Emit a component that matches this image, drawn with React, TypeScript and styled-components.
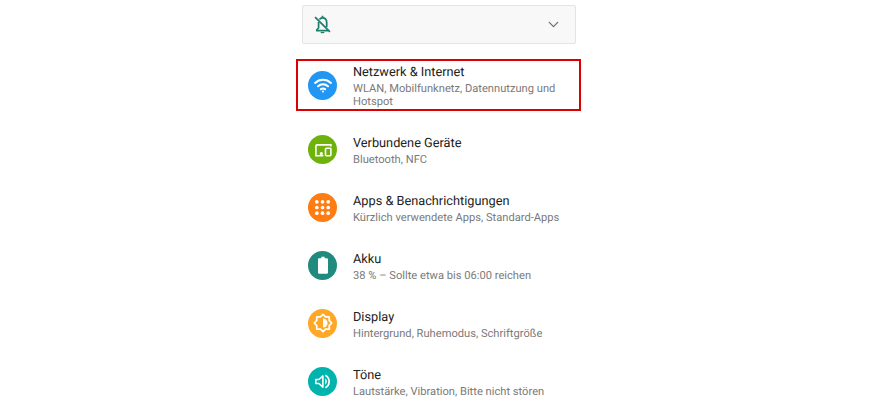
import React from "react";
import styled, { createGlobalStyle } from "styled-components";
import { ChevronDown } from "lucide-react";

const GlobalStyle = createGlobalStyle`
  html, body {
    margin: 0;
    padding: 0;
    background: #fff;
    font-family: Roboto, "Liberation Sans", sans-serif;
    text-rendering: geometricPrecision;
  }
  body {
    height: 400px;
    overflow: hidden;
  }
`;

const Page = styled.div`
  width: 285px;
  height: 400px;
  overflow: hidden;
  padding: 5px 0 0 296px;
`;

const Banner = styled.div`
  box-sizing: border-box;
  width: 274px;
  height: 39px;
  margin: 0 0 15px 6px;
  padding: 0 13px 0 9px;
  display: flex;
  align-items: center;
  justify-content: space-between;
  background: #f8f8f8;
  border: 1px solid #e4e4e4;
  border-radius: 2px;
  color: #6d6d6d;
`;

const Row = styled.div<{ $selected?: boolean }>`
  box-sizing: border-box;
  display: flex;
  align-items: center;
  gap: 16px;
  padding-left: ${(p) => (p.$selected ? "10px" : "12px")};
  height: ${(p) => (p.$selected ? "52px" : "58px")};
  margin-bottom: ${(p) => (p.$selected ? "9px" : "0")};
  border: ${(p) => (p.$selected ? "2px solid #dd0000" : "none")};
`;

const IconCircle = styled.div<{ $color: string }>`
  flex: none;
  width: 29px;
  height: 29px;
  border-radius: 50%;
  background: ${(p) => p.$color};
  display: flex;
  align-items: center;
  justify-content: center;
  color: #fff;
`;

const TextBlock = styled.div<{ $selected?: boolean }>`
  display: flex;
  flex-direction: column;
  gap: 1px;
  min-width: 0;
  padding-top: ${(p) => (p.$selected ? "1px" : "2px")};
`;

const Title = styled.div`
  font-size: 12.75px;
  line-height: 17px;
  color: #212121;
`;

const Summary = styled.div`
  font-size: 11.15px;
  line-height: 13px;
  color: #7a7a7a;
  width: 212px;
`;

const BellOff = () => (
  <svg width="21" height="21" viewBox="0 0 24 24" fill="none" stroke="#1c7f6c" strokeWidth="2">
    <path d="M9.500 20.500c.4 1 1.300 1.500 2.500 1.500s2.100-.5 2.500-1.500" fill="#1c7f6c" stroke="none" />
    <path d="M7.500 9v7l-2 2v1h13M8.500 6.200C9.300 5 10.500 4.500 12 4.500c3 0 4.800 2.300 4.800 5.500v5" strokeLinejoin="round" />
    <path d="M12 2v2.500" />
    <path d="M3.500 3.500l17 17" />
  </svg>
);

const WifiIcon = () => (
  <svg width="20" height="20" viewBox="0 0 24 24" fill="none" stroke="#fff" strokeWidth="2.500" strokeLinecap="round">
    <path d="M2.500 9.500c5.500-5 13.500-5 19 0" />
    <path d="M6 13.500c3.500-3 8.500-3 12 0" />
    <path d="M9.500 17c1.500-1 3.500-1 5 0" />
    <circle cx="12" cy="19.800" r="1.300" fill="#fff" stroke="none" />
  </svg>
);

const DevicesIcon = () => (
  <svg width="20" height="20" viewBox="0 0 24 24" fill="none" stroke="#fff" strokeWidth="1.900">
    <path d="M12.500 20H3.500V8.500A1.500 1.500 0 0 1 5 7h16.500v2" />
    <rect x="15" y="11" width="6.500" height="9" rx="1" />
    <circle cx="10" cy="17.500" r="1.900" fill="#fff" stroke="none" />
  </svg>
);

const AppsIcon = () => (
  <svg width="17" height="17" viewBox="0 0 24 24" fill="#fff">
    {[4, 12, 20].flatMap((y) =>
      [4, 12, 20].map((x) => <circle key={`${x}-${y}`} cx={x} cy={y} r="2.600" />)
    )}
  </svg>
);

const BatteryIcon = () => (
  <svg width="20" height="20" viewBox="0 0 24 24" fill="#fff">
    <path d="M10 2h4v2h2.500c.8 0 1.500.7 1.500 1.500V21c0 .8-.7 1.500-1.500 1.500h-9C6.700 22.500 6 21.800 6 21V5.500C6 4.700 6.700 4 7.500 4H10z" />
  </svg>
);

const BrightnessIcon = () => (
  <svg width="22" height="22" viewBox="0 0 24 24" fill="none" stroke="#fff" strokeWidth="1.900">
    <path
      d="M12 2.500l2.800 2.700h4v4L21.500 12l-2.700 2.800v4h-4L12 21.500l-2.800-2.700h-4v-4L2.500 12l2.700-2.800v-4h4z"
      strokeLinejoin="round"
    />
    <path d="M12 7a5 5 0 0 1 0 10z" fill="#fff" stroke="none" />
  </svg>
);

const VolumeIcon = () => (
  <svg width="19" height="19" viewBox="0 0 24 24" fill="none" stroke="#fff" strokeWidth="2">
    <path d="M3.500 9.500v5h4l5 4.500v-14l-5 4.500z" strokeLinejoin="round" />
    <path d="M15.500 8a5 5 0 0 1 0 8z" fill="#fff" stroke="none" />
    <path d="M15.500 4a9 9 0 0 1 0 16" strokeWidth="2.200" />
  </svg>
);

const items = [
  {
    title: "Netzwerk & Internet",
    summary: "WLAN, Mobilfunknetz, Datennutzung und Hotspot",
    color: "#2196f3",
    icon: <WifiIcon />,
    selected: true,
  },
  {
    title: "Verbundene Geräte",
    summary: "Bluetooth, NFC",
    color: "#6eb30b",
    icon: <DevicesIcon />,
  },
  {
    title: "Apps & Benachrichtigungen",
    summary: "Kürzlich verwendete Apps, Standard-Apps",
    color: "#ff7c13",
    icon: <AppsIcon />,
  },
  {
    title: "Akku",
    summary: "38 % – Sollte etwa bis 06:00 reichen",
    color: "#1f8a7d",
    icon: <BatteryIcon />,
  },
  {
    title: "Display",
    summary: "Hintergrund, Ruhemodus, Schriftgröße",
    color: "#ffa726",
    icon: <BrightnessIcon />,
  },
  {
    title: "Töne",
    summary: "Lautstärke, Vibration, Bitte nicht stören",
    color: "#00b3ad",
    icon: <VolumeIcon />,
  },
];

const App = () => {
  return (
    <Page>
      <GlobalStyle />
      <Banner>
        <BellOff />
        <ChevronDown size={17} strokeWidth={1.800} />
      </Banner>
      {items.map((item) => (
        <Row key={item.title} $selected={item.selected}>
          <IconCircle $color={item.color}>{item.icon}</IconCircle>
          <TextBlock $selected={item.selected}>
            <Title>{item.title}</Title>
            <Summary>{item.summary}</Summary>
          </TextBlock>
        </Row>
      ))}
    </Page>
  );
};

export default App;
